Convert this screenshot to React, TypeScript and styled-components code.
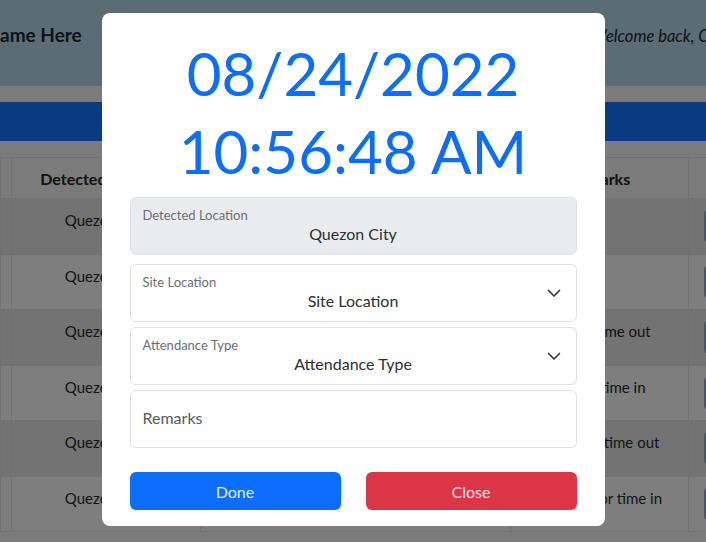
import React from "react";
import styled, { createGlobalStyle } from "styled-components";

const GlobalStyle = createGlobalStyle`
  html, body { margin: 0; padding: 0; }
  body {
    font-family: Lato, "Liberation Sans", sans-serif;
    color: #212529;
    overflow: hidden;
  }
  * { box-sizing: border-box; }
`;

const Page = styled.div`
  width: 706px;
  height: 542px;
  overflow: hidden;
  background: #f6f6f6;
  display: flex;
  flex-direction: column;
`;

const TopBar = styled.header`
  height: 86px;
  flex: none;
  background: #b6dae8;
  display: flex;
  align-items: center;
  justify-content: space-between;
  padding-bottom: 15px;
`;

const Brand = styled.div`
  font-size: 19px;
  font-weight: 700;
  color: #212529;
  margin-top: -2px;
  white-space: nowrap;
`;

const Welcome = styled.div`
  width: 115px;
  font-size: 16.5px;
  font-style: italic;
  white-space: nowrap;
  overflow: hidden;
  color: #212529;
`;

const Banner = styled.div`
  margin-top: 16px;
  height: 39px;
  flex: none;
  background: #1474ff;
`;

const TableWrap = styled.div`
  margin-top: 16px;
  width: 800px;
`;

const Table = styled.table`
  width: 800px;
  table-layout: fixed;
  border-collapse: collapse;
  font-size: 15px;
`;

const HeadCell = styled.th`
  height: 41px;
  border: 1px solid #dee2e6;
  font-size: 16px;
  font-weight: 700;
  text-align: center;
  white-space: nowrap;
  overflow: hidden;
  padding: 0 4px;
`;

const Row = styled.tr<{ $striped: boolean }>`
  height: 55.5px;
  background: ${(p) => (p.$striped ? "#e6e6e6" : "#fdfdfd")};
`;

const Cell = styled.td`
  border: 1px solid #dee2e6;
  vertical-align: top;
  padding: 10px 4px 0;
  line-height: 22px;
  text-align: center;
  white-space: nowrap;
  overflow: hidden;
  color: #26292d;
`;

const ActionCell = styled.td`
  border: 1px solid #dee2e6;
  vertical-align: top;
  padding: 10px 15px 0;
`;

const MiniButton = styled.span`
  display: block;
  width: 60px;
  height: 34px;
  border-radius: 5px;
  background: #8fa9d8;
`;

const Backdrop = styled.div`
  position: fixed;
  inset: 0;
  background: rgba(0, 0, 0, 0.5);
  display: flex;
  justify-content: center;
  align-items: flex-start;
  padding-top: 13px;
`;

const Dialog = styled.div`
  width: 503px;
  background: #fff;
  border-radius: 8px;
  padding: 21px 28px 16px;
`;

const Clock = styled.div`
  color: #0d6efd;
  font-size: 60px;
  line-height: 78px;
  text-align: center;
  white-space: nowrap;
`;

const Fields = styled.div`
  margin-top: 7px;
  display: flex;
  flex-direction: column;
  gap: 5px;
`;

const Field = styled.div<{ $readOnly?: boolean; $spaced?: boolean }>`
  position: relative;
  height: 58px;
  border: 1px solid #dee2e6;
  border-radius: 6px;
  background: ${(p) => (p.$readOnly ? "#e9ecef" : "#fff")};
  padding: 9px 12px 0;
  margin-bottom: ${(p) => (p.$spaced ? "4px" : "0")};
`;

const Label = styled.div`
  font-size: 13px;
  line-height: 16px;
  color: #6a6e72;
`;

const Value = styled.div`
  margin-top: 1px;
  font-size: 16px;
  line-height: 20px;
  text-align: center;
  color: #2b2f33;
`;

const Placeholder = styled.div`
  font-size: 16px;
  line-height: 20px;
  color: #555a5e;
  padding-top: 8px;
`;

const Chevron = styled.svg`
  position: absolute;
  right: 14px;
  top: 50%;
  transform: translateY(-50%);
  width: 16px;
  height: 16px;
`;

const Actions = styled.div`
  margin-top: 24px;
  display: grid;
  grid-template-columns: 1fr 1fr;
  gap: 25px;
`;

const Button = styled.button<{ $variant: "primary" | "danger" }>`
  height: 38px;
  border: none;
  border-radius: 6px;
  font-family: Lato, "Liberation Sans", sans-serif;
  font-size: 16px;
  color: rgba(255, 255, 255, 0.92);
  background: ${(p) => (p.$variant === "primary" ? "#0d6efd" : "#dc3545")};
`;

const ChevronIcon = () => (
  <Chevron viewBox="0 0 16 16" fill="none">
    <path
      d="M2.5 5.5l5.5 5.5 5.5-5.5"
      stroke="#343a40"
      strokeWidth="1.7"
      strokeLinecap="round"
      strokeLinejoin="round"
    />
  </Chevron>
);

const remarks = [
  "",
  "",
  "Forgot time out",
  "Forgot time in",
  "Apply for time out",
  "Request for time in",
];

export default function App() {
  return (
    <>
      <GlobalStyle />
      <Page>
        <TopBar>
          <Brand>ame Here</Brand>
          <Welcome>Welcome back, Carlo Santos</Welcome>
        </TopBar>
        <Banner />
        <TableWrap>
          <Table>
            <colgroup>
              <col style={{ width: 11 }} />
              <col style={{ width: 189 }} />
              <col style={{ width: 310 }} />
              <col style={{ width: 178 }} />
              <col style={{ width: 112 }} />
            </colgroup>
            <thead>
              <tr>
                <HeadCell />
                <HeadCell>Detected Location</HeadCell>
                <HeadCell>Date and Time</HeadCell>
                <HeadCell>Remarks</HeadCell>
                <HeadCell>Action</HeadCell>
              </tr>
            </thead>
            <tbody>
              {remarks.map((r, i) => (
                <Row key={i} $striped={i % 2 === 0}>
                  <Cell />
                  <Cell>Quezon City</Cell>
                  <Cell>08/24/2022 10:56 AM</Cell>
                  <Cell>{r}</Cell>
                  <ActionCell>
                    <MiniButton />
                  </ActionCell>
                </Row>
              ))}
            </tbody>
          </Table>
        </TableWrap>
      </Page>
      <Backdrop>
        <Dialog>
          <Clock>08/24/2022</Clock>
          <Clock>10:56:48 AM</Clock>
          <Fields>
            <Field $readOnly $spaced>
              <Label>Detected Location</Label>
              <Value>Quezon City</Value>
            </Field>
            <Field>
              <Label>Site Location</Label>
              <Value>Site Location</Value>
              <ChevronIcon />
            </Field>
            <Field>
              <Label>Attendance Type</Label>
              <Value>Attendance Type</Value>
              <ChevronIcon />
            </Field>
            <Field>
              <Placeholder>Remarks</Placeholder>
            </Field>
          </Fields>
          <Actions>
            <Button $variant="primary">Done</Button>
            <Button $variant="danger">Close</Button>
          </Actions>
        </Dialog>
      </Backdrop>
    </>
  );
}
